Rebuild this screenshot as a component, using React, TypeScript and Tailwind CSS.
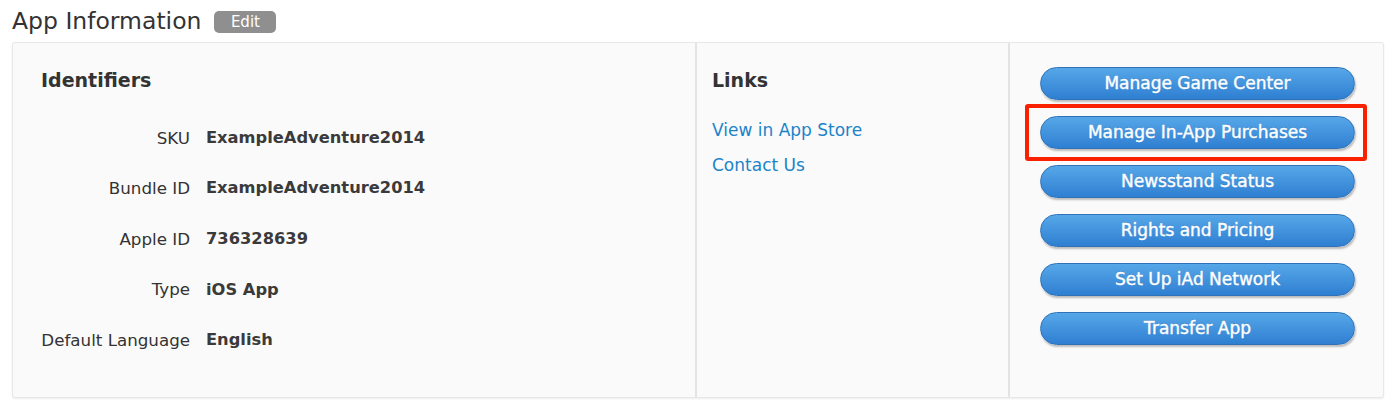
import React from "react";

const rows: [string, string][] = [
  ["SKU", "ExampleAdventure2014"],
  ["Bundle ID", "ExampleAdventure2014"],
  ["Apple ID", "736328639"],
  ["Type", "iOS App"],
  ["Default Language", "English"],
];

const buttons = [
  "Manage Game Center",
  "Manage In-App Purchases",
  "Newsstand Status",
  "Rights and Pricing",
  "Set Up iAd Network",
  "Transfer App",
];

function BlueButton({ label }: { label: string }) {
  return (
    <div className="h-[33px] w-[315px] rounded-full border border-[#2f72b8] bg-gradient-to-b from-[#56a7e8] to-[#2f7fd2] shadow-[1px_2px_2px_rgba(0,0,0,0.25)] flex items-center justify-center text-white text-[17px] leading-none whitespace-nowrap [-webkit-text-stroke:0.4px_white] [text-shadow:0_-1px_0_rgba(0,0,0,0.15)]">
      {label}
    </div>
  );
}

export default function App() {
  return (
    <div className="w-[1398px] h-[410px] bg-white font-['DejaVu_Sans',sans-serif] text-[#333]">
      <div className="flex items-center pl-[12px] pt-[8px] h-[42px] pb-[6px]">
        <span className="text-[23.5px] leading-none text-[#333]">App Information</span>
        <span className="ml-[13px] h-[22px] w-[62px] rounded-[5px] bg-[#8f8f8f] text-white text-[15px] flex items-center justify-center leading-none">
          Edit
        </span>
      </div>
      <div className="ml-[12px] w-[1372px] h-[356px] bg-[#fafafa] border border-[#e8e8e8] rounded-[3px] shadow-[0_1px_2px_rgba(0,0,0,0.08)] flex">
        <div className="w-[684px] border-r-2 border-[#e3e3e3] pl-[28px] pt-[28px]">
          <div className="text-[19px] font-bold text-[#333] leading-none">Identifiers</div>
          <div className="mt-[36px] flex flex-col gap-[26.6px]">
            {rows.map(([k, v]) => (
              <div key={k} className="flex items-center h-[24px] leading-none whitespace-nowrap">
                <div className="w-[149px] text-right text-[#333] text-[16.7px]">{k}</div>
                <div className="ml-[16px] font-bold text-[#3a3a3a] text-[16.3px]">{v}</div>
              </div>
            ))}
          </div>
        </div>
        <div className="w-[313px] border-r-2 border-[#e3e3e3] pl-[15px] pt-[28px]">
          <div className="text-[19px] font-bold text-[#333] leading-none">Links</div>
          <div className="mt-[32px] flex flex-col gap-[18px] text-[17px] text-[#1b84c9] leading-none">
            <span>View in App Store</span>
            <span>Contact Us</span>
          </div>
        </div>
        <div className="flex-1 pl-[30px] pt-[24px] flex flex-col gap-[16px]">
          {buttons.map((b) => (
            <div key={b} className="relative">
              <BlueButton label={b} />
              {b === "Manage In-App Purchases" && (
                <div className="absolute left-[-15px] top-[-12px] w-[342px] h-[57px] border-[4px] border-[#fa2100] rounded-[3px]" />
              )}
            </div>
          ))}
        </div>
      </div>
    </div>
  );
}
